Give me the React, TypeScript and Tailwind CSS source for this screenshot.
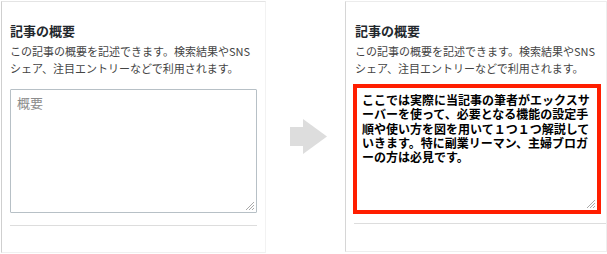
import React from "react";

const jp = { fontFamily: '"Noto Sans CJK JP", "Noto Sans", sans-serif' };

function Grip() {
  return (
    <svg width="11" height="11" viewBox="0 0 11 11" className="absolute right-[1px] bottom-[1px]">
      <line x1="10" y1="2" x2="2" y2="10" stroke="#a9a9a9" strokeWidth="1" />
      <line x1="10" y1="5" x2="5" y2="10" stroke="#a9a9a9" strokeWidth="1" />
      <line x1="10" y1="8" x2="8" y2="10" stroke="#a9a9a9" strokeWidth="1" />
    </svg>
  );
}

function Heading() {
  return (
    <>
      <div className="text-[13px] leading-[18px] font-bold text-[#23282d]">記事の概要</div>
      <div className="mt-[3px] text-[11px] leading-[17px] text-[#444]">
        この記事の概要を記述できます。検索結果やSNS
        <br />
        シェア、注目エントリーなどで利用されます。
      </div>
    </>
  );
}

export default function App() {
  return (
    <div className="w-[607px] h-[254px] bg-white flex overflow-hidden" style={jp}>
      {/* left panel */}
      <div className="mt-[1px] ml-[1px] w-[265px] h-[252px] border-l border-t border-r border-b border-l-[#cfcfcf] border-t-[#e4e4e4] border-r-[#f2f2f2] border-b-[#f0f0f0] px-2 pt-[20px] flex flex-col">
        <Heading />
        <div className="relative mt-[12px] h-[124px] border border-[#b7c0c6] rounded-[1px] pl-[6px] pt-[4px] bg-white">
          <div className="text-[13px] leading-[17px] text-[#8c8c8c]">概要</div>
          <Grip />
        </div>
        <div className="mt-[12px] h-px bg-[#dddddd]" />
      </div>

      {/* arrow */}
      <div className="w-[79px] pl-[24px] pt-[119px]">
        <svg width="38" height="35" viewBox="0 0 38 35">
          <polygon points="0,8 13,8 13,0 37,17.5 13,35 13,27 0,27" fill="#dddddd" />
        </svg>
      </div>

      {/* right panel */}
      <div className="mt-[1px] w-[262px] h-[251px] border-l border-t border-r border-b border-l-[#d6d6d6] border-t-[#ececec] border-r-[#eeeeee] border-b-[#eeeeee] pl-[9px] pt-[20px] flex flex-col">
        <Heading />
        <div className="relative mt-[7px] ml-[-2px] w-[248px] h-[130px] border-[4px] border-[#ff1e00] bg-white pl-[5px] pt-[5px]">
          <div className="text-[12px] leading-[14.3px] font-bold text-black whitespace-nowrap">
            ここでは実際に当記事の筆者がエックスサ
            <br />
            ーバーを使って、必要となる機能の設定手
            <br />
            順や使い方を図を用いて１つ１つ解説して
            <br />
            いきます。特に副業リーマン、主婦ブロガ
            <br />
            ーの方は必見です。
          </div>
          <Grip />
        </div>
        <div className="mt-[9px] ml-[-1px] h-px bg-[#dddddd]" />
      </div>
    </div>
  );
}
